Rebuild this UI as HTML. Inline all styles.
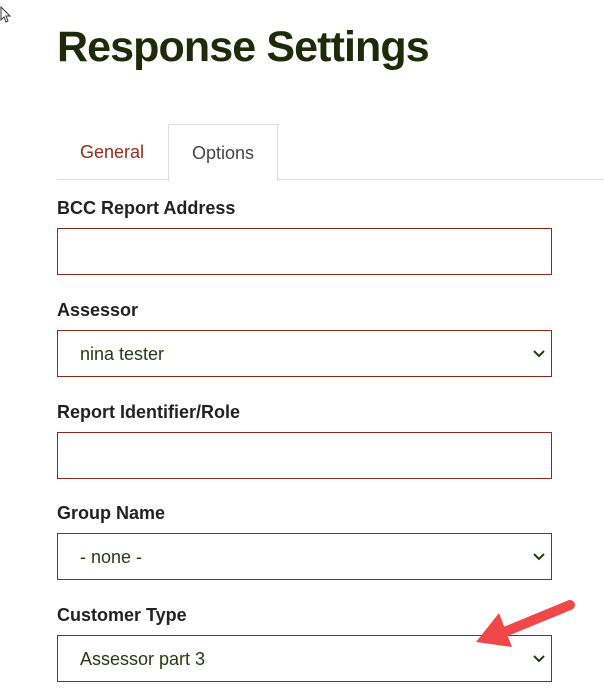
<!DOCTYPE html><html><head><style>
body{margin:0;width:604px;height:699px;background:#fff;font-family:"Liberation Sans",sans-serif;position:relative;overflow:hidden}
h1{position:absolute;left:57px;top:23px;margin:0;font-size:43px;font-weight:bold;color:#1f2a08;letter-spacing:-0.9px}
.line{position:absolute;left:57px;right:0;top:179px;height:1px;background:#ddd}
.tab{position:absolute;top:124px;height:56px;line-height:56px;font-size:18px;text-align:center}
.t1{left:57px;width:110px;color:#9b2a1a}
.t2{left:168px;width:108px;border:1px solid #ddd;border-bottom:1px solid #fff;color:#444;background:#fff}
.lab{position:absolute;left:57px;font-size:18px;font-weight:bold;color:#222}
.in{position:absolute;left:57px;width:493px;height:45px;border:1px solid #8b2a1a;font-size:18px;color:#2a3a10;line-height:47px;box-sizing:content-box}
.in span{position:absolute;left:22px}
.chev{position:absolute;right:6px;top:18px}
</style></head><body>
<svg style="position:absolute;left:0;top:6px" width="12" height="18"><path d="M1 1 L1 14 L4 11 L6 16 L8 15 L6 10 L10 10 Z" fill="#fff" stroke="#333"/></svg>
<h1>Response Settings</h1>
<div class="line"></div>
<div class="tab t1">General</div>
<div class="tab t2">Options</div>
<div class="lab" style="top:198px">BCC Report Address</div>
<div class="in" style="top:228px"></div>
<div class="lab" style="top:300px">Assessor</div>
<div class="in" style="top:330px"><span>nina tester</span><svg class="chev" width="12" height="10"><path d="M1 2 L6 7 L11 2" fill="none" stroke="#2a3a10" stroke-width="2"/></svg></div>
<div class="lab" style="top:402px">Report Identifier/Role</div>
<div class="in" style="top:432px"></div>
<div class="lab" style="top:503px">Group Name</div>
<div class="in" style="top:533px"><span>- none -</span><svg class="chev" width="12" height="10"><path d="M1 2 L6 7 L11 2" fill="none" stroke="#2a3a10" stroke-width="2"/></svg></div>
<div class="lab" style="top:605px">Customer Type</div>
<div class="in" style="top:635px"><span>Assessor part 3</span><svg class="chev" width="12" height="10"><path d="M1 2 L6 7 L11 2" fill="none" stroke="#2a3a10" stroke-width="2"/></svg></div>
<svg style="position:absolute;left:470px;top:595px" width="110" height="60"><path d="M100 10 L32 38" stroke="#f04848" stroke-width="10" stroke-linecap="round"/><path d="M6 47 L29 18 L42 52 Z" fill="#f04848"/></svg>
</body></html>
